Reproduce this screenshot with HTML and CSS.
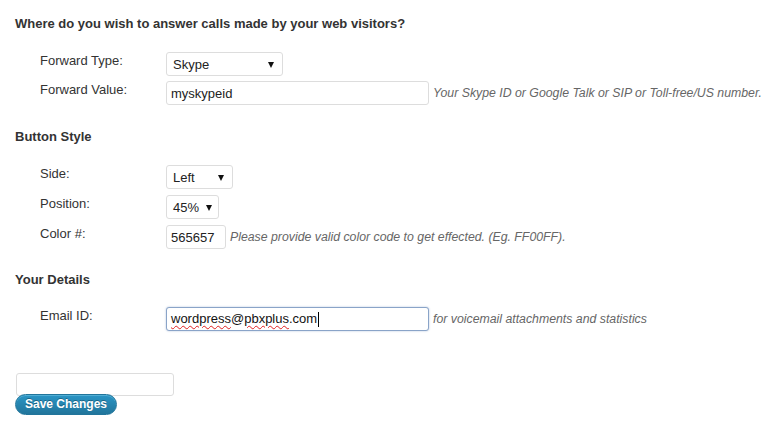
FILE: index.html
```html
<!DOCTYPE html>
<html>
<head>
<meta charset="utf-8">
<link rel="stylesheet" href="styles.css">
</head>
<body>
<div class="wrap">
  <h3 class="h-first">Where do you wish to answer calls made by your web visitors?</h3>
  <div class="rows rows-a">
    <div class="row">
      <div class="label">Forward Type:</div>
      <div class="field">
        <div class="select w-skype"><span>Skype</span><i class="arrow"></i></div>
      </div>
    </div>
    <div class="row">
      <div class="label">Forward Value:</div>
      <div class="field">
        <input class="text w-long" type="text" value="myskypeid">
        <span class="desc">Your Skype ID or Google Talk or SIP or Toll-free/US number.</span>
      </div>
    </div>
  </div>

  <h3 class="h-next h-style">Button Style</h3>
  <div class="rows rows-b">
    <div class="row">
      <div class="label">Side:</div>
      <div class="field">
        <div class="select w-side"><span>Left</span><i class="arrow"></i></div>
      </div>
    </div>
    <div class="row">
      <div class="label">Position:</div>
      <div class="field">
        <div class="select w-pos"><span>45%</span><i class="arrow"></i></div>
      </div>
    </div>
    <div class="row">
      <div class="label">Color #:</div>
      <div class="field">
        <input class="text w-color" type="text" value="565657">
        <span class="desc">Please provide valid color code to get effected. (Eg. FF00FF).</span>
      </div>
    </div>
  </div>

  <h3 class="h-next h-details">Your Details</h3>
  <div class="rows rows-c">
    <div class="row">
      <div class="label">Email ID:</div>
      <div class="field">
        <div class="text w-long focus"><span class="spell">wordpress</span>@<span class="spell">pbxplus</span>.com<span class="caret"></span></div>
        <span class="desc">for voicemail attachments and statistics</span>
      </div>
    </div>
  </div>

  <div class="submit">
    <input class="text w-empty" type="text" value="">
    <button class="button" type="button">Save Changes</button>
  </div>
</div>
</body>
</html>
```
FILE: styles.css
```css
html, body {
  margin: 0;
  padding: 0;
  background: #fff;
}
body {
  font-family: "Liberation Sans", Arial, sans-serif;
  font-size: 13px;
  color: #333;
}
.wrap {
  padding: 0 15px;
}
h3 {
  margin: 0;
  font-size: 13px;
  line-height: 15px;
  font-weight: bold;
  color: #333;
}
.h-first { padding-top: 16px; }
.h-style { margin-top: 24px; }
.h-details { margin-top: 23px; }
.rows {
  display: flex;
  flex-direction: column;
  margin-top: 21px;
}
.rows-a { gap: 5px; }
.rows-b { gap: 6px; margin-top: 21px; }
.rows-c { margin-top: 20px; }
.row {
  display: flex;
  align-items: flex-start;
  height: 24px;
}
.label {
  width: 126px;
  padding-left: 25px;
  padding-top: 1px;
  line-height: 15px;
  color: #333;
  flex: none;
}
.field {
  display: flex;
  align-items: center;
  height: 24px;
}
.select {
  position: relative;
  box-sizing: border-box;
  height: 24px;
  border: 1px solid #ddd;
  border-radius: 3px;
  background: #fff;
  padding-left: 6px;
  line-height: 22px;
  color: #222;
  font-size: 13px;
}
.select span {
  display: inline-block;
  padding-top: 1px;
}
.arrow {
  position: absolute;
  right: 8px;
  top: 9px;
  width: 0;
  height: 0;
  border-left: 3.5px solid transparent;
  border-right: 3.5px solid transparent;
  border-top: 6px solid #111;
}
.w-skype { width: 117px; }
.w-side { width: 67px; }
.w-pos { width: 53px; }
.w-pos .arrow { right: 6px; }
.text {
  box-sizing: border-box;
  height: 24px;
  margin: 0;
  border: 1px solid #ddd;
  border-radius: 3px;
  background: #fff;
  padding: 0 4px;
  font-family: "Liberation Sans", Arial, sans-serif;
  font-size: 13px;
  line-height: 22px;
  color: #222;
  outline: none;
}
.w-long { width: 263px; }
.w-color { width: 60px; }
.w-empty { width: 158px; height: 23px; }
.focus {
  border-color: #8aa4c8;
  box-shadow: 0 0 2px rgba(70, 110, 170, 0.45);
  display: flex;
  align-items: center;
  color: #111;
}
.spell {
  text-decoration: underline wavy #e02020;
  text-decoration-thickness: 1px;
  text-underline-offset: 2px;
}
.caret {
  display: inline-block;
  width: 1px;
  height: 15px;
  background: #000;
  margin-left: 1px;
}
.desc {
  margin-left: 4px;
  font-size: 12.3px;
  font-style: italic;
  color: #666;
}
.submit {
  display: flex;
  flex-direction: column;
  align-items: flex-start;
  margin-top: 42px;
}
.submit .w-empty { margin-left: 1px; }
.button {
  margin-top: -2px;
  height: 21px;
  padding: 0 9px;
  border: 1px solid #21759b;
  border-radius: 11px;
  background: linear-gradient(to bottom, #2a95c5, #21759b);
  color: #fff;
  font-family: "Liberation Sans", Arial, sans-serif;
  font-size: 12px;
  font-weight: bold;
  line-height: 19px;
  text-shadow: 0 -1px 0 rgba(0, 0, 0, 0.3);
  box-shadow: inset 0 1px 0 rgba(120, 200, 230, 0.5);
  cursor: pointer;
}
```
